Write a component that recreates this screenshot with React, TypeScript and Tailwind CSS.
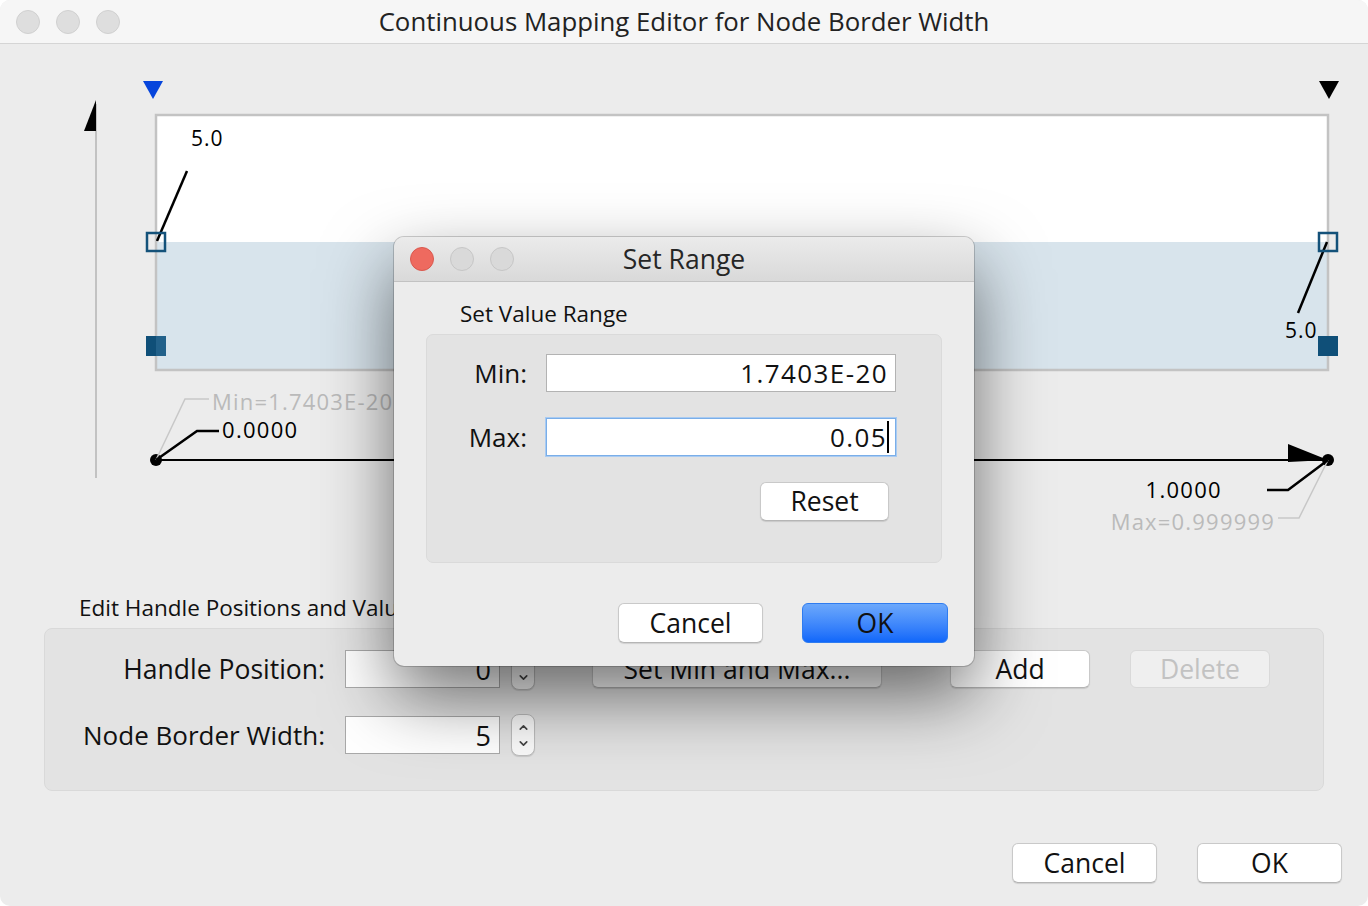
import React from "react";
import { ChevronUp, ChevronDown } from "lucide-react";

function Btn({ children, className = "" }: { children: React.ReactNode; className?: string }) {
  return (
    <div
      className={
        "flex items-center justify-center rounded-[6px] bg-white border border-[#c9c9c9] border-b-[#b5b5b5] shadow-[0_1px_1px_rgba(0,0,0,0.12)] text-[26.5px] leading-none text-[#111] " +
        className
      }
    >
      {children}
    </div>
  );
}

function Spinner({ up = true }: { up?: boolean }) {
  return (
    <div className="w-[24px] h-[42px] rounded-[8px] bg-[#fafafa] border border-[#bdbdbd] shadow-[0_1px_1px_rgba(0,0,0,0.12)] flex flex-col items-center justify-center gap-[3px] text-[#444]">
      {up ? <ChevronUp size={13} strokeWidth={3} /> : <div className="h-[13px]" />}
      <ChevronDown size={13} strokeWidth={3} />
    </div>
  );
}

function Chart() {
  return (
    <svg
      className="block w-[1368px] h-[552px]"
      viewBox="0 44 1368 552"
      style={{ fontFamily: "'Open Sans', sans-serif" }}
    >
      <line x1={96} y1={104} x2={96} y2={478} stroke="#c2c2c2" strokeWidth={2} />
      <polygon points="96,100 96,131 84,131" fill="#000" />
      <polygon points="143,81 163,81 153,99" fill="#0645dc" />
      <polygon points="1319,81 1339,81 1329,99" fill="#000" />
      <rect x={156} y={115} width={1172} height={127} fill="#fff" />
      <rect x={156} y={242} width={1172} height={128} fill="#d8e4ec" />
      <rect x={156} y={115} width={1172} height={255} fill="none" stroke="#c3c3c3" strokeWidth={2.5} />
      <line x1={157} y1={241} x2={187} y2={171} stroke="#000" strokeWidth={2.5} />
      <rect x={147} y={233} width={18} height={18} fill="none" stroke="#14527a" strokeWidth={2.5} />
      <text x={191} y={146} fontSize={21} fill="#000" letterSpacing={1}>5.0</text>
      <rect x={146} y={336} width={10} height={20} fill="#0f4f78" />
      <rect x={156} y={336} width={10} height={20} fill="#22618a" />
      <line x1={1327} y1={242} x2={1298} y2={313} stroke="#000" strokeWidth={2.5} />
      <rect x={1319} y={233} width={18} height={18} fill="none" stroke="#14527a" strokeWidth={2.5} />
      <text x={1285} y={338} fontSize={21} fill="#000" letterSpacing={1}>5.0</text>
      <rect x={1318} y={336} width={10} height={20} fill="#0f4f78" />
      <rect x={1328} y={336} width={10} height={20} fill="#0f4f78" />
      <line x1={156} y1={460} x2={1326} y2={460} stroke="#000" strokeWidth={2} />
      <polygon points="1288,444 1328,460 1288,462" fill="#000" />
      <circle cx={156} cy={460} r={6} fill="#000" />
      <circle cx={1328} cy={460} r={6} fill="#000" />
      <polyline points="156,460 185,399 209,399" fill="none" stroke="#c8c8c8" strokeWidth={1.5} />
      <text x={212} y={410} fontSize={22} fill="#bababa" letterSpacing={1.2}>Min=1.7403E-20</text>
      <polyline points="156,460 197,431 219,431" fill="none" stroke="#000" strokeWidth={2.5} />
      <text x={222} y={438} fontSize={22} fill="#000" letterSpacing={1.3}>0.0000</text>
      <polyline points="1328,460 1299,518 1278,518" fill="none" stroke="#c8c8c8" strokeWidth={1.5} />
      <text x={1275} y={530} fontSize={22} fill="#bababa" textAnchor="end" letterSpacing={1.2}>Max=0.999999</text>
      <polyline points="1328,460 1288,490 1267,490" fill="none" stroke="#000" strokeWidth={2.5} />
      <text x={1222} y={498} fontSize={22} fill="#000" textAnchor="end" letterSpacing={1.3}>1.0000</text>
    </svg>
  );
}

function Dialog() {
  return (
    <div className="absolute left-[394px] top-[237px] w-[580px] h-[429px] rounded-[10px] bg-[#ececec] overflow-hidden shadow-[0_0_0_1px_rgba(0,0,0,0.18),0_30px_70px_rgba(0,0,0,0.55)] flex flex-col">
      <div className="h-[45px] shrink-0 bg-gradient-to-b from-[#ebebeb] to-[#d9d9d9] border-b border-[#c2c2c2] grid grid-cols-[1fr_auto_1fr] items-center px-[16px]">
        <div className="flex gap-[16px]">
          <div className="w-[24px] h-[24px] rounded-full bg-[#ee6a5f] border border-[#d9584e]" />
          <div className="w-[24px] h-[24px] rounded-full bg-[#d9d9d9] border border-[#c6c6c6]" />
          <div className="w-[24px] h-[24px] rounded-full bg-[#d9d9d9] border border-[#c6c6c6]" />
        </div>
        <div className="text-[26.5px] text-[#262626] leading-none">Set Range</div>
        <div />
      </div>
      <div className="pt-[20px] pl-[66px] h-[24px] box-content text-[22.5px] leading-[24px] text-[#111]">Set Value Range</div>
      <div className="mt-[8px] ml-[32px] w-[516px] h-[229px] rounded-[7px] bg-[#e3e3e3] border border-[#dadada] flex flex-col">
        <div className="mt-[19px] flex items-center h-[38px]">
          <div className="w-[100px] text-right text-[26px] leading-none text-[#111]">Min:</div>
          <div className="ml-[19px] w-[350px] h-[38px] bg-white border border-[#b3b3b3] flex items-center justify-end pr-[7px] text-[26px] leading-none text-[#111] tracking-[1.4px]">
            1.7403E-20
          </div>
        </div>
        <div className="mt-[26px] flex items-center h-[38px]">
          <div className="w-[100px] text-right text-[26px] leading-none text-[#111]">Max:</div>
          <div className="ml-[19px] w-[350px] h-[38px] bg-white border border-[#7aaee8] shadow-[0_0_0_1px_#a9cbf2] flex items-center justify-end pr-[6px] text-[26px] leading-none text-[#111] tracking-[1.4px]">
            0.05<span className="w-[2px] h-[32px] bg-black" />
          </div>
        </div>
        <div className="mt-[26px] flex">
          <Btn className="ml-[333px] w-[129px] h-[39px]">Reset</Btn>
        </div>
      </div>
      <div className="mt-[40px] flex justify-end gap-[39px] pr-[26px]">
        <Btn className="w-[145px] h-[40px]">Cancel</Btn>
        <div className="w-[146px] h-[40px] rounded-[6px] bg-gradient-to-b from-[#6ca8fb] to-[#0f67fa] border border-[#2f7cf0] flex items-center justify-center text-[26.5px] leading-none text-[#111]">
          OK
        </div>
      </div>
    </div>
  );
}

export default function App() {
  return (
    <div className="w-[1368px] h-[906px] bg-white font-['Open_Sans',sans-serif]">
      <div className="relative w-full h-full rounded-[10px] bg-[#ececec] overflow-hidden flex flex-col">
        <div className="h-[44px] shrink-0 bg-[#f6f6f6] border-b border-[#d5d5d5] grid grid-cols-[1fr_auto_1fr] items-center px-[16px]">
          <div className="flex gap-[16px]">
            <div className="w-[24px] h-[24px] rounded-full bg-[#dedede] border border-[#d0d0d0]" />
            <div className="w-[24px] h-[24px] rounded-full bg-[#dedede] border border-[#d0d0d0]" />
            <div className="w-[24px] h-[24px] rounded-full bg-[#dedede] border border-[#d0d0d0]" />
          </div>
          <div className="text-[25.8px] text-[#222] leading-none">Continuous Mapping Editor for Node Border Width</div>
          <div />
        </div>
        <Chart />
        <div className="pl-[79px] h-[24px] leading-[24px] text-[22.5px] text-[#111] whitespace-nowrap">Edit Handle Positions and Values</div>
        <div className="mt-[8px] ml-[44px] w-[1280px] h-[163px] rounded-[8px] bg-[#e3e3e3] border border-[#d9d9d9] pt-[21px]">
          <div className="flex items-center h-[38px]">
            <div className="w-[280px] text-right text-[26.5px] leading-none text-[#111] whitespace-nowrap">Handle Position:</div>
            <div className="ml-[20px] w-[155px] h-[38px] bg-white border border-[#a9a9a9] flex items-center justify-end pr-[8px] text-[27px] leading-none text-[#111]">0</div>
            <div className="ml-[11px]"><Spinner up={false} /></div>
            <Btn className="ml-[57px] w-[290px] h-[38px]">Set Min and Max...</Btn>
            <Btn className="ml-[68px] w-[140px] h-[38px]">Add</Btn>
            <div className="ml-[40px] w-[140px] h-[38px] rounded-[6px] bg-[#efefef] border border-[#d9d9d9] flex items-center justify-center text-[26.5px] leading-none text-[#c2c2c2]">Delete</div>
          </div>
          <div className="mt-[28px] flex items-center h-[38px]">
            <div className="w-[280px] text-right text-[26px] leading-none text-[#111] whitespace-nowrap">Node Border Width:</div>
            <div className="ml-[20px] w-[155px] h-[38px] bg-white border border-[#a9a9a9] flex items-center justify-end pr-[8px] text-[27px] leading-none text-[#111]">5</div>
            <div className="ml-[11px]"><Spinner /></div>
          </div>
        </div>
        <div className="mt-[52px] flex justify-end gap-[40px] pr-[26px]">
          <Btn className="w-[145px] h-[40px]">Cancel</Btn>
          <Btn className="w-[145px] h-[40px]">OK</Btn>
        </div>
        <Dialog />
      </div>
    </div>
  );
}
